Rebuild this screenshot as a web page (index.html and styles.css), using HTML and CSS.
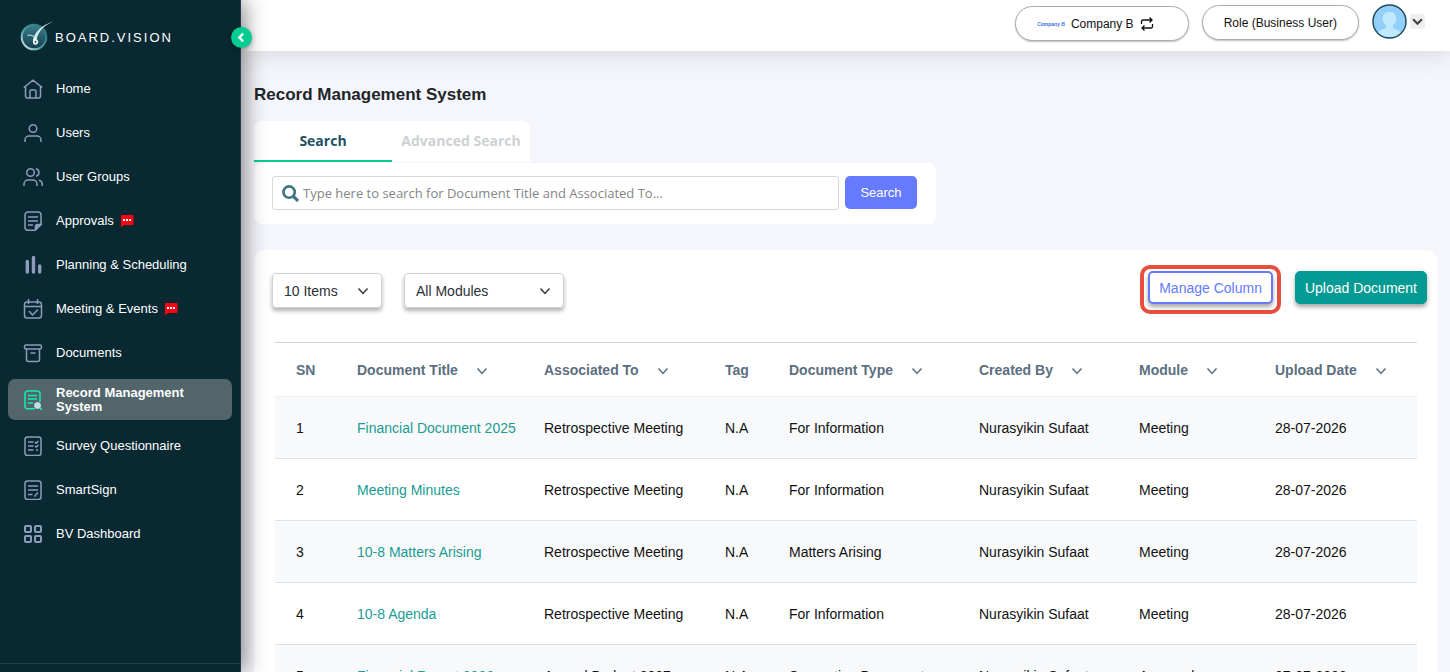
FILE: index.html
```html
<!DOCTYPE html>
<html lang="en">
<head>
    <meta charset="UTF-8">
    <meta name="viewport" content="width=device-width, initial-scale=1.0">
    <title>Record Management System</title>
    <link rel="stylesheet" href="styles.css">
</head>
<body>
    <svg class="sprite" aria-hidden="true">
        <symbol id="chevron" viewBox="0 0 12 12"><path d="M1.500 3.500 6 8.500l4.500-5" fill="none" stroke="currentColor" stroke-width="1.500"/></symbol>
        <symbol id="bubble" viewBox="0 0 14 14"><path d="M1.500 1h11a1 1 0 0 1 1 1v8a1 1 0 0 1-1 1H4l-3 2.500V2a1 1 0 0 1 .5-1z" fill="#ff0012"/><path d="M3 5h2v2H3zM6 5h2v2H6zM9 5h2v2H9z" fill="#fff"/></symbol>
    </svg>

    <div class="app">
        <aside class="sidebar">
            <a href="#" class="brand">
                <svg class="brand-logo" viewBox="0 0 36 32">
                    <defs>
                        <linearGradient id="ring" x1="1" y1="0" x2="0" y2="1">
                            <stop offset="0" stop-color="#1f6f72"/>
                            <stop offset="0.6" stop-color="#4fa39e"/>
                            <stop offset="1" stop-color="#e6f5ef"/>
                        </linearGradient>
                        <linearGradient id="disc" x1="0" y1="0" x2="0" y2="1">
                            <stop offset="0" stop-color="#3f7c8f"/>
                            <stop offset="1" stop-color="#123f4c"/>
                        </linearGradient>
                    </defs>
                    <circle cx="15" cy="17" r="12.300" fill="url(#disc)" stroke="url(#ring)" stroke-width="2"/>
                    <path d="M34.500 1.500C26 5 19.500 10 17.500 20l-3.500 1.500C14.500 12 23 5 34.500 1.500z" fill="#c9ebe6"/>
                    <path d="M16 18c-1.500 3-1.800 5.500.3 5.800 2.800.2 2.800-4.300-.3-3.800" fill="none" stroke="#f3fbf9" stroke-width="1.800" stroke-linecap="round"/>
                    <path d="M8.500 15.500c3-.8 5.500 0 7 1.800" fill="none" stroke="#8fd0c8" stroke-width="1.400"/>
                </svg>
                <span>BOARD.VISION</span>
            </a>
            <button class="collapse" aria-label="Collapse menu">
                <svg viewBox="0 0 10 10"><path d="M6.500 1.500 3 5l3.500 3.500" fill="none" stroke="#fff" stroke-width="2"/></svg>
            </button>

            <nav class="menu">
                <a href="#" class="menu-item">
                    <svg class="menu-icon" viewBox="0 0 20 20"><path d="M.8 8.500 10 1.200l9.200 7.300M2.500 7.500V17a2 2 0 0 0 2 2h11a2 2 0 0 0 2-2V7.500M7 19v-7a1 1 0 0 1 1-1h4a1 1 0 0 1 1 1v7"/></svg>
                    <span>Home</span>
                </a>
                <a href="#" class="menu-item">
                    <svg class="menu-icon" viewBox="0 0 20 20"><circle cx="10" cy="5.500" r="3.800"/><path d="M2 19v-2a4 4 0 0 1 4-4h8a4 4 0 0 1 4 4v2"/></svg>
                    <span>Users</span>
                </a>
                <a href="#" class="menu-item">
                    <svg class="menu-icon" viewBox="0 0 20 20"><circle cx="7.500" cy="5.500" r="3.800"/><path d="M1 19v-2a4 4 0 0 1 4-4h5a4 4 0 0 1 4 4v2M13 1.800a3.800 3.800 0 0 1 0 7.400M16 13.200c2 .5 3.200 2 3.200 3.800v2"/></svg>
                    <span>User Groups</span>
                </a>
                <a href="#" class="menu-item">
                    <svg class="menu-icon" viewBox="0 0 20 20"><path d="M12 19.200H5a3 3 0 0 1-3-3V4a3 3 0 0 1 3-3h10a3 3 0 0 1 3 3v9.500zM5 6h10M5 10h10M5 14h5"/><path d="M12.500 19v-3.500a2 2 0 0 1 2-2H18z" fill="currentColor"/></svg>
                    <span>Approvals</span>
                    <svg class="bubble"><use href="#bubble"/></svg>
                </a>
                <a href="#" class="menu-item">
                    <svg class="menu-icon bars" viewBox="0 0 20 20"><path d="M4.300 6.500v10.500M10.500 2.500V17M16.700 11v6"/></svg>
                    <span>Planning &amp; Scheduling</span>
                </a>
                <a href="#" class="menu-item">
                    <svg class="menu-icon" viewBox="0 0 20 20"><rect x="1.500" y="3" width="17" height="16" rx="2.500"/><path d="M5.500 0v5M14.500 0v5M1.500 7.500h17M6 12l3.500 4 5.500-5.500"/></svg>
                    <span>Meeting &amp; Events</span>
                    <svg class="bubble"><use href="#bubble"/></svg>
                </a>
                <a href="#" class="menu-item">
                    <svg class="menu-icon" viewBox="0 0 20 20"><rect x="1.500" y="2" width="17" height="4" rx="1.500"/><path d="M3.500 6v10.500a2 2 0 0 0 2 2h9a2 2 0 0 0 2-2V6M7.500 10h5"/></svg>
                    <span>Documents</span>
                </a>
                <a href="#" class="menu-item active">
                    <svg class="menu-icon" viewBox="0 0 20 20"><path d="M12 18.700H4.500A2.500 2.500 0 0 1 2 16.200V3.500A2.500 2.500 0 0 1 4.500 1h10A2.500 2.500 0 0 1 17 3.500V12M5 5.500h9M5 9h9M5 13h5M16 17l3 3"/><circle cx="14.500" cy="15.500" r="3" fill="#b9dfe8" stroke="#b9dfe8" stroke-width="1"/></svg>
                    <span>Record Management System</span>
                </a>
                <a href="#" class="menu-item">
                    <svg class="menu-icon" viewBox="0 0 20 20"><rect x="2" y="1" width="16" height="18.500" rx="2.500"/><path d="M5 6h5.500M5 10h5.500M5 14h5.500M12 6l1.200 1.200L15.500 5M12 10l1.200 1L15.500 9M13 14h2"/></svg>
                    <span>Survey Questionnaire</span>
                </a>
                <a href="#" class="menu-item">
                    <svg class="menu-icon" viewBox="0 0 20 20"><rect x="2" y="1" width="16" height="18.500" rx="2.500"/><path d="M5 6h10M5 10h10M5 14.500h4.500M11.500 16.500l3.500-4"/></svg>
                    <span>SmartSign</span>
                </a>
                <a href="#" class="menu-item">
                    <svg class="menu-icon thick" viewBox="0 0 20 20"><rect x="2" y="2" width="6" height="6" rx="1"/><rect x="12" y="2" width="6" height="6" rx="1"/><rect x="2" y="12" width="6" height="6" rx="1"/><rect x="12" y="12" width="6" height="6" rx="1"/></svg>
                    <span>BV Dashboard</span>
                </a>
            </nav>
            <div class="sidebar-footer"></div>
        </aside>

        <div class="page">
            <header class="topbar">
                <button class="pill company">
                    <span class="company-logo">Company B</span>
                    <span>Company B</span>
                    <svg class="swap" viewBox="0 0 14 14"><path d="M1.500 7V4.500a1.500 1.500 0 0 1 1.500-1.500h9M9.500.5 12 3 9.500 5.500M12.500 7v2.500a1.500 1.500 0 0 1-1.500 1.500H2M4.500 8.500 2 11l2.500 2.500" fill="none" stroke="currentColor" stroke-width="1.300"/></svg>
                </button>
                <button class="pill role">Role (Business User)</button>
                <button class="profile" aria-label="Profile">
                    <svg class="avatar" viewBox="0 0 36 36">
                        <clipPath id="face"><circle cx="18" cy="18" r="16"/></clipPath>
                        <circle cx="18" cy="18" r="17" fill="#93cffb" stroke="#1d4a5c" stroke-width="1.500"/>
                        <path clip-path="url(#face)" d="M18 8c4.500 0 7 3 7 7 0 3-1.500 5.500-3.500 6.800V25c4 1 9 3 10 9H4c1-6 6-8 10.500-9v-3.200C12.500 20.500 11 18 11 15c0-4 2.500-7 7-7z" fill="#bfeafd"/>
                    </svg>
                    <span class="caret"><svg viewBox="0 0 10 10"><path d="M1 3l4 4 4-4" fill="none" stroke="#444" stroke-width="2"/></svg></span>
                </button>
            </header>

            <main class="content">
                <h1>Record Management System</h1>

                <div class="tabs">
                    <button class="tab active">Search</button>
                    <button class="tab">Advanced Search</button>
                </div>
                <form class="search-card">
                    <label class="search-box">
                        <svg viewBox="0 0 18 18"><circle cx="7.500" cy="7.500" r="6" fill="none" stroke="#417388" stroke-width="2.800"/><path d="M11.800 11.800 17 17" stroke="#417388" stroke-width="3.200"/></svg>
                        <input type="text" aria-label="Search" placeholder="Type here to search for Document Title and Associated To...">
                    </label>
                    <button type="button" class="search-btn">Search</button>
                </form>

                <section class="records">
                    <div class="toolbar">
                        <div class="filters">
                            <div class="select items">
                                <select aria-label="Items per page"><option>10 Items</option></select>
                                <svg><use href="#chevron"/></svg>
                            </div>
                            <div class="select modules">
                                <select aria-label="Module"><option>All Modules</option></select>
                                <svg><use href="#chevron"/></svg>
                            </div>
                        </div>
                        <div class="actions">
                            <div class="highlight"><button class="btn manage">Manage Column</button></div>
                            <button class="btn upload">Upload Document</button>
                        </div>
                    </div>

                    <table>
                        <thead>
                            <tr>
                                <th class="col-sn">SN</th>
                                <th class="col-title">Document Title<svg><use href="#chevron"/></svg></th>
                                <th class="col-assoc">Associated To<svg><use href="#chevron"/></svg></th>
                                <th class="col-tag">Tag</th>
                                <th class="col-type">Document Type<svg><use href="#chevron"/></svg></th>
                                <th class="col-by">Created By<svg><use href="#chevron"/></svg></th>
                                <th class="col-module">Module<svg><use href="#chevron"/></svg></th>
                                <th class="col-date">Upload Date<svg><use href="#chevron"/></svg></th>
                            </tr>
                        </thead>
                        <tbody>
                            <tr>
                                <td>1</td>
                                <td><a href="#">Financial Document 2025</a></td>
                                <td>Retrospective Meeting</td>
                                <td>N.A</td>
                                <td>For Information</td>
                                <td>Nurasyikin Sufaat</td>
                                <td>Meeting</td>
                                <td>28-07-2026</td>
                            </tr>
                            <tr>
                                <td>2</td>
                                <td><a href="#">Meeting Minutes</a></td>
                                <td>Retrospective Meeting</td>
                                <td>N.A</td>
                                <td>For Information</td>
                                <td>Nurasyikin Sufaat</td>
                                <td>Meeting</td>
                                <td>28-07-2026</td>
                            </tr>
                            <tr>
                                <td>3</td>
                                <td><a href="#">10-8 Matters Arising</a></td>
                                <td>Retrospective Meeting</td>
                                <td>N.A</td>
                                <td>Matters Arising</td>
                                <td>Nurasyikin Sufaat</td>
                                <td>Meeting</td>
                                <td>28-07-2026</td>
                            </tr>
                            <tr>
                                <td>4</td>
                                <td><a href="#">10-8 Agenda</a></td>
                                <td>Retrospective Meeting</td>
                                <td>N.A</td>
                                <td>For Information</td>
                                <td>Nurasyikin Sufaat</td>
                                <td>Meeting</td>
                                <td>28-07-2026</td>
                            </tr>
                            <tr>
                                <td>5</td>
                                <td><a href="#">Financial Report 2026</a></td>
                                <td>Annual Budget 2027</td>
                                <td>N.A</td>
                                <td>Supporting Document</td>
                                <td>Nurasyikin Sufaat</td>
                                <td>Approvals</td>
                                <td>27-07-2026</td>
                            </tr>
                        </tbody>
                    </table>
                </section>
            </main>
        </div>
    </div>
</body>
</html>
```
FILE: styles.css
```css
* {
    box-sizing: border-box;
}
body {
    margin: 0;
    background-color: #f5f6fb;
    color: #111;
    font-family: "Liberation Sans", Arial, sans-serif;
    font-size: 14px;
}
button, select, input {
    font-family: inherit;
    font-size: inherit;
    cursor: pointer;
}
a {
    text-decoration: none;
}
.sprite {
    display: none;
}
.app {
    display: flex;
    height: 100vh;
    overflow: hidden;
}

/* Sidebar */
.sidebar {
    position: relative;
    z-index: 2;
    display: flex;
    flex-direction: column;
    flex: 0 0 241px;
    background-color: #082832;
    border-right: 1px solid #1f3d47;
    box-shadow: 4px 0 20px rgba(0, 0, 0, 0.45);
    font-size: 13px;
}
.brand {
    display: flex;
    align-items: center;
    height: 71px;
    padding: 0 0 0 19px;
    color: #fff;
    letter-spacing: 2px;
}
.brand span {
    padding-top: 3px;
}
.brand-logo {
    width: 36px;
    height: 32px;
}
.collapse {
    position: absolute;
    top: 27px;
    right: -12px;
    display: flex;
    align-items: center;
    justify-content: center;
    width: 21px;
    height: 21px;
    padding: 0;
    border: none;
    border-radius: 50%;
    background-color: #05cc93;
    box-shadow: 0 1px 4px rgba(0, 0, 0, 0.3);
}
.collapse svg {
    width: 11px;
    height: 11px;
}
.menu {
    display: flex;
    flex-direction: column;
    gap: 8px;
    padding: 0 8px;
}
.menu-item {
    display: flex;
    align-items: center;
    min-height: 36px;
    padding: 0 30px 0 15px;
    border-radius: 7px;
    color: #fff;
    line-height: 14px;
}
.menu-icon {
    flex: none;
    width: 20px;
    height: 20px;
    margin-right: 13px;
    color: #8e9bbd;
    fill: none;
    stroke: currentColor;
    stroke-width: 1.5;
}
.menu-icon.bars {
    stroke-width: 3.4;
    stroke-linecap: round;
}
.menu-icon.thick {
    stroke-width: 2;
}
.menu-item.active {
    min-height: 41px;
    background-color: #51656b;
    font-weight: bold;
}
.active .menu-icon {
    color: #12eeb0;
}
.bubble {
    width: 14px;
    height: 14px;
    margin-left: 6px;
}
.sidebar-footer {
    height: 9px;
    margin-top: auto;
    border-top: 1px solid #21424b;
}

/* Top bar */
.page {
    flex: 1;
    min-width: 0;
}
.topbar {
    display: flex;
    align-items: flex-start;
    justify-content: flex-end;
    gap: 13px;
    height: 51px;
    padding: 4px 25px 0 0;
    background-color: #fff;
    box-shadow: 0 4px 24px rgba(0, 0, 0, 0.12);
}
.pill {
    height: 35px;
    margin-top: 1px;
    padding: 0 21px;
    border: 1px solid #a9acaf;
    border-radius: 18px;
    background-color: #fff;
    box-shadow: 0 1px 2px rgba(0, 0, 0, 0.25);
    color: #111;
    font-size: 12px;
}
.company {
    display: flex;
    align-items: center;
    gap: 6px;
    margin-top: 2px;
    padding: 0 34px 0 21px;
}
.company-logo {
    color: #3b6fe0;
    font-size: 5px;
    font-style: italic;
    font-weight: bold;
}
.swap {
    width: 14px;
    height: 14px;
}
.profile {
    display: flex;
    align-items: center;
    gap: 3px;
    padding: 0;
    border: none;
    background: none;
}
.avatar {
    width: 35px;
    height: 35px;
}
.caret {
    display: flex;
    align-items: center;
    justify-content: center;
    width: 15px;
    height: 15px;
    border-radius: 3px;
    background-color: #efefef;
}
.caret svg {
    width: 11px;
    height: 11px;
}

/* Content */
.content {
    padding: 34px 13px 0;
}
h1 {
    margin: 0 0 16px;
    color: #212529;
    font-size: 17px;
    line-height: 20px;
}
.tabs {
    display: inline-flex;
    border-radius: 7px 7px 0 0;
    background-color: #fff;
}
.tab {
    width: 138px;
    height: 41px;
    padding: 0;
    border: none;
    border-bottom: 2px solid transparent;
    background: none;
    color: #ced1d3;
    font-family: "Open Sans", "Noto Sans", sans-serif;
    font-weight: bold;
    font-size: 14px;
}
.tab.active {
    border-bottom-color: #05cc93;
    color: #1d5065;
}
.search-card {
    display: flex;
    gap: 6px;
    width: 682px;
    max-width: 100%;
    margin-top: 1px;
    padding: 13px 19px 14px 18px;
    border-radius: 8px;
    background-color: #fff;
}
.search-box {
    display: flex;
    flex: 1;
    align-items: center;
    gap: 4px;
    height: 34px;
    padding: 0 9px;
    border: 1px solid #d5d8e0;
    border-radius: 3px;
}
.search-box svg {
    width: 17px;
    height: 17px;
}
.search-box input {
    flex: 1;
    padding: 0;
    border: none;
    outline: none;
    font-family: "Open Sans", "Noto Sans", sans-serif;
    font-size: 13px;
    cursor: text;
}
.search-box input::placeholder {
    color: #858585;
}
.search-btn {
    width: 72px;
    height: 33px;
    border: none;
    border-radius: 5px;
    background-color: #667aff;
    color: #fff;
    font-size: 13px;
}

/* Records table */
.records {
    min-height: 100vh;
    margin-top: 26px;
    padding: 15px 10px 0 18px;
    border-radius: 10px;
    background-color: #fff;
}
.toolbar {
    display: flex;
    align-items: flex-start;
    justify-content: space-between;
}
.filters {
    display: flex;
    gap: 22px;
    padding-top: 8px;
}
.select {
    position: relative;
}
.select select {
    appearance: none;
    width: 100%;
    height: 35px;
    padding: 0 11px;
    border: 1px solid #ced4da;
    border-radius: 4px;
    background-color: #fff;
    box-shadow: 0 3px 4px rgba(0, 0, 0, 0.3);
    color: #2b3035;
}
.select svg {
    position: absolute;
    top: 12px;
    right: 13px;
    width: 12px;
    height: 12px;
    color: #343a40;
    pointer-events: none;
}
.items {
    width: 110px;
}
.modules {
    width: 160px;
}
.actions {
    display: flex;
    align-items: flex-start;
    gap: 14px;
}
.highlight {
    padding: 2px 4px 6px;
    border: 4px solid #e54f3c;
    border-radius: 10px;
}
.btn {
    display: block;
    height: 33px;
    padding: 0 9px;
    border: 1px solid;
    border-radius: 5px;
    box-shadow: 0 3px 4px rgba(0, 0, 0, 0.35);
}
.manage {
    border: 2px solid #667aff;
    background-color: #fff;
    color: #667aff;
}
.upload {
    margin-top: 6px;
    border-color: #029a92;
    background-color: #029a92;
    color: #fff;
}
table {
    width: calc(100% - 13px);
    margin: 28px 10px 0 3px;
    border-collapse: collapse;
    table-layout: fixed;
}
th, td {
    height: 62px;
    padding: 0 0 0 21px;
    border-bottom: 1px solid #dee2e6;
    text-align: left;
    white-space: nowrap;
}
th {
    height: 54px;
    border-top: 1px solid #d3d6d8;
    border-bottom-color: #eef0f2;
    color: #5b6f80;
}
th svg {
    width: 12px;
    height: 12px;
    margin-left: 18px;
    vertical-align: -2px;
}
tbody tr:nth-child(odd) {
    background-color: #f8f9fb;
}
td a {
    color: #1a9c93;
}
.col-sn { width: 61px; }
.col-title { width: 187px; }
.col-assoc { width: 181px; }
.col-tag { width: 64px; }
.col-type { width: 190px; }
.col-by { width: 160px; }
.col-module { width: 136px; }
.col-date { width: 163px; }
```
